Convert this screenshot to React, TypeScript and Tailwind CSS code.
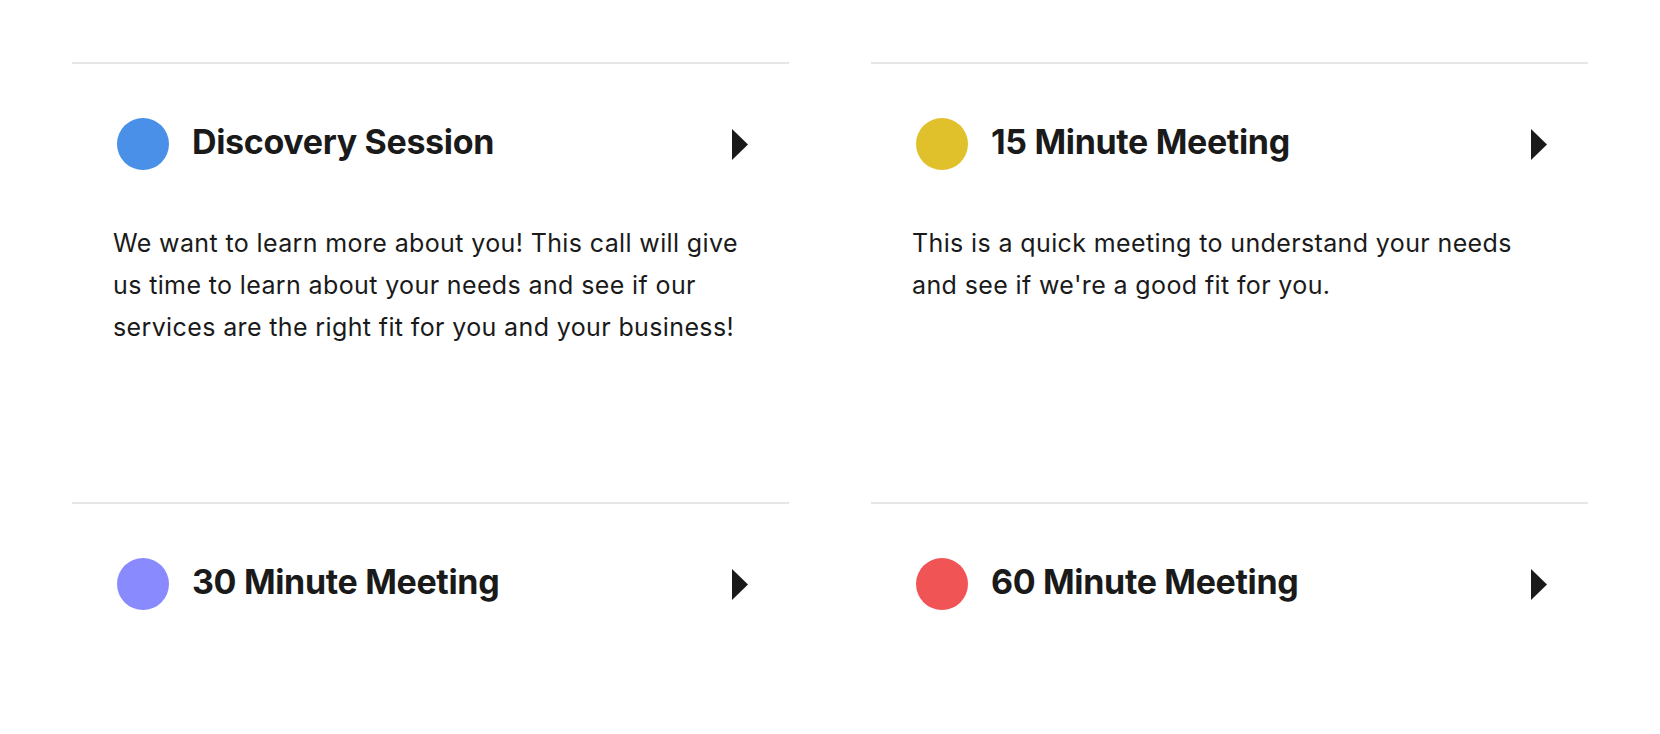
import React from "react";

type EventType = {
  title: string;
  color: string;
  description?: string;
};

const events: EventType[] = [
  {
    title: "Discovery Session",
    color: "bg-[#4a90e8]",
    description:
      "We want to learn more about you! This call will give\nus time to learn about your needs and see if our\nservices are the right fit for you and your business!",
  },
  {
    title: "15 Minute Meeting",
    color: "bg-[#e0c12c]",
    description: "This is a quick meeting to understand your needs\nand see if we're a good fit for you.",
  },
  { title: "30 Minute Meeting", color: "bg-[#8a8aff]" },
  { title: "60 Minute Meeting", color: "bg-[#f05454]" },
];

function Arrow() {
  return (
    <svg width="16" height="31" viewBox="0 0 16 31" className="shrink-0">
      <polygon points="0,0 16,15.5 0,31" fill="#1a1a1a" />
    </svg>
  );
}

function EventCard({ event }: { event: EventType }) {
  return (
    <div className="h-[440px] border-t-2 border-[#e6e6e6]">
      <div className="flex items-center pt-[54px] pl-[45px] pr-[41px]">
        <span className={`h-[52px] w-[52px] rounded-full shrink-0 ${event.color}`} />
        <h2 className="ml-[23px] flex-1 text-[34px] font-bold leading-none tracking-[-0.01em] text-[#1a1a1a] -mt-[4px]">
          {event.title}
        </h2>
        <Arrow />
      </div>
      {event.description && (
        <p className="mt-[52px] pl-[41px] pr-[10px] whitespace-pre-line text-[25px] leading-[42px] tracking-[0.015em] text-[#1a1a1a]">
          {event.description}
        </p>
      )}
    </div>
  );
}

export default function App() {
  return (
    <div className="min-h-screen bg-white pt-[62px] px-[72px] font-['Inter',sans-serif]">
      <div className="grid grid-cols-2 gap-x-[82px]">
        {events.map((e) => (
          <EventCard key={e.title} event={e} />
        ))}
      </div>
    </div>
  );
}
